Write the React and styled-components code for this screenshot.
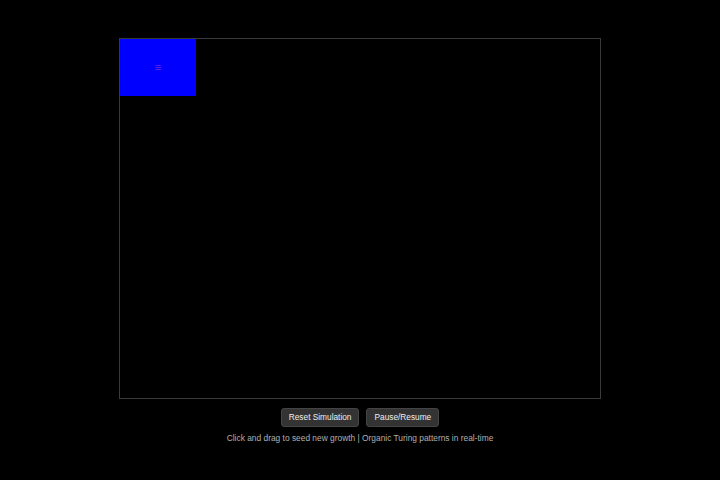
import styled, { createGlobalStyle } from 'styled-components';

const GlobalStyle = createGlobalStyle`
    html, body {
        margin: 0;
        padding: 0;
        background: #000;
    }
    body {
        font-family: "Liberation Sans", Arial, sans-serif;
    }
`;

const Page = styled.div`
    min-height: 100vh;
    display: flex;
    flex-direction: column;
    align-items: center;
    justify-content: center;
`;

const Stage = styled.div`
    position: relative;
    width: 480px;
    height: 359px;
    border: 1px solid #3a3a3a;
    background: #000;
`;

const Seed = styled.div`
    position: absolute;
    left: 0;
    top: 0;
    width: 76px;
    height: 57px;
    background: #0000ff;
    display: flex;
    align-items: center;
    justify-content: center;
    color: #6a2bd8;
    font-size: 11px;
`;

const Controls = styled.div`
    display: flex;
    gap: 7px;
    margin-top: 9px;
`;

const Button = styled.button`
    height: 19px;
    padding: 0 7px;
    background: #333;
    color: #eee;
    border: 1px solid #444;
    border-radius: 3px;
    font-family: "Liberation Sans", Arial, sans-serif;
    font-size: 8.3px;
    cursor: pointer;
`;

const Caption = styled.div`
    margin-top: 6px;
    color: #b0b0b0;
    font-size: 8.4px;
`;

const App = () => {
    return (
        <Page>
            <GlobalStyle />
            <Stage>
                <Seed>≡</Seed>
            </Stage>
            <Controls>
                <Button>Reset Simulation</Button>
                <Button>Pause/Resume</Button>
            </Controls>
            <Caption>Click and drag to seed new growth | Organic Turing patterns in real-time</Caption>
        </Page>
    );
};

export default App;
